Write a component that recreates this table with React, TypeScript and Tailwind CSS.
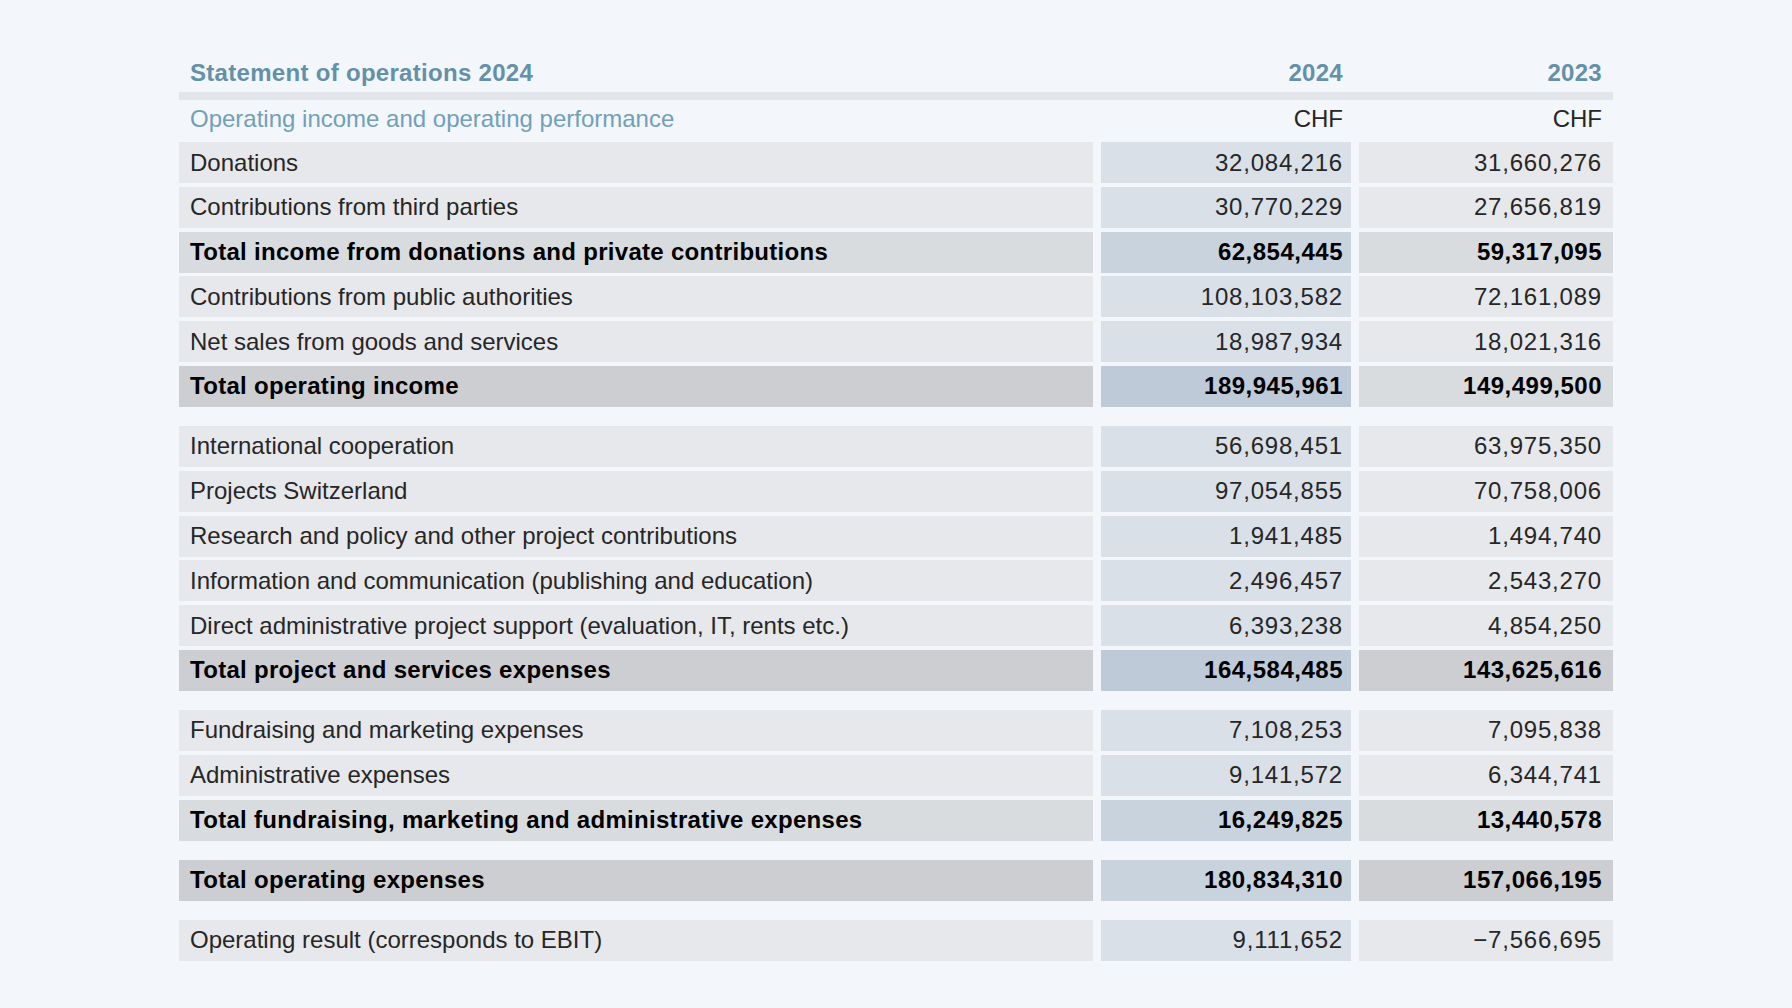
import React from "react"

type Tone = "row" | "sub" | "total" | "totalAll" | "grand"

type Line = {
	label: string
	y2024: string
	y2023: string
	tone: Tone
}

// background colours per tone: [label, 2024, 2023]
const tones: Record<Tone, [string, string, string]> = {
	row: ["bg-[#e7e8eb]", "bg-[#d9e0e8]", "bg-[#e7e8eb]"],
	sub: ["bg-[#d9dcdf]", "bg-[#c9d3de]", "bg-[#d9dcdf]"],
	total: ["bg-[#cdced2]", "bg-[#bfcad8]", "bg-[#d9dcdf]"],
	totalAll: ["bg-[#cdced2]", "bg-[#bfcad8]", "bg-[#cdced2]"],
	grand: ["bg-[#cdced2]", "bg-[#c9d3de]", "bg-[#cdced2]"],
}

const groups: Line[][] = [
	[
		{ label: "Donations", y2024: "32,084,216", y2023: "31,660,276", tone: "row" },
		{ label: "Contributions from third parties", y2024: "30,770,229", y2023: "27,656,819", tone: "row" },
		{ label: "Total income from donations and private contributions", y2024: "62,854,445", y2023: "59,317,095", tone: "sub" },
		{ label: "Contributions from public authorities", y2024: "108,103,582", y2023: "72,161,089", tone: "row" },
		{ label: "Net sales from goods and services", y2024: "18,987,934", y2023: "18,021,316", tone: "row" },
		{ label: "Total operating income", y2024: "189,945,961", y2023: "149,499,500", tone: "total" },
	],
	[
		{ label: "International cooperation", y2024: "56,698,451", y2023: "63,975,350", tone: "row" },
		{ label: "Projects Switzerland", y2024: "97,054,855", y2023: "70,758,006", tone: "row" },
		{ label: "Research and policy and other project contributions", y2024: "1,941,485", y2023: "1,494,740", tone: "row" },
		{ label: "Information and communication (publishing and education)", y2024: "2,496,457", y2023: "2,543,270", tone: "row" },
		{ label: "Direct administrative project support (evaluation, IT, rents etc.)", y2024: "6,393,238", y2023: "4,854,250", tone: "row" },
		{ label: "Total project and services expenses", y2024: "164,584,485", y2023: "143,625,616", tone: "totalAll" },
	],
	[
		{ label: "Fundraising and marketing expenses", y2024: "7,108,253", y2023: "7,095,838", tone: "row" },
		{ label: "Administrative expenses", y2024: "9,141,572", y2023: "6,344,741", tone: "row" },
		{ label: "Total fundraising, marketing and administrative expenses", y2024: "16,249,825", y2023: "13,440,578", tone: "sub" },
	],
	[
		{ label: "Total operating expenses", y2024: "180,834,310", y2023: "157,066,195", tone: "grand" },
	],
	[
		{ label: "Operating result (corresponds to EBIT)", y2024: "9,111,652", y2023: "\u22127,566,695", tone: "row" },
	],
]

const Row = ({ line }: { line: Line }) => {
	const [a, b, c] = tones[line.tone]
	const bold = line.tone !== "row"
	const text = bold ? "font-bold text-black" : "font-normal text-[#262626]"
	const num = bold ? "tracking-[0.5px]" : "tracking-[0.8px]"
	return (
		<div className={`grid grid-cols-[914px_250px_254px] gap-x-[8px] h-[41px] ${text}`}>
			<div className={`${a} flex items-center pl-[11px] ${bold ? "tracking-[0.3px]" : ""}`}>{line.label}</div>
			<div className={`${b} flex items-center justify-end pr-[8px] ${num}`}>{line.y2024}</div>
			<div className={`${c} flex items-center justify-end pr-[11px] ${num}`}>{line.y2023}</div>
		</div>
	)
}

export default function App() {
	return (
		<div className="min-h-screen bg-[#f3f6fa] pt-[54px] font-['Liberation_Sans',Arial,sans-serif] text-[24px] leading-none">
			<div className="mx-auto w-[1434px]">
				{/* header */}
				<div className="grid grid-cols-[914px_250px_254px] gap-x-[8px] h-[38px] font-bold text-[#6490a8] tracking-[0.3px]">
					<div className="flex items-center pl-[11px]">Statement of operations 2024</div>
					<div className="flex items-center justify-end pr-[8px]">2024</div>
					<div className="flex items-center justify-end pr-[11px]">2023</div>
				</div>
				<div className="h-[8px] bg-[#e2e5e9]" />
				<div className="grid grid-cols-[914px_250px_254px] gap-x-[8px] h-[42px] pb-[4px]">
					<div className="flex items-center pl-[11px] text-[#72a0b8]">Operating income and operating performance</div>
					<div className="flex items-center justify-end pr-[8px] text-[#262626]">CHF</div>
					<div className="flex items-center justify-end pr-[11px] text-[#262626]">CHF</div>
				</div>

				<div className="flex flex-col gap-[19px]">
					{groups.map((g, i) => (
						<div key={i} className="flex flex-col gap-[3.8px]">
							{g.map((line) => (
								<Row key={line.label} line={line} />
							))}
						</div>
					))}
				</div>
			</div>
		</div>
	)
}
